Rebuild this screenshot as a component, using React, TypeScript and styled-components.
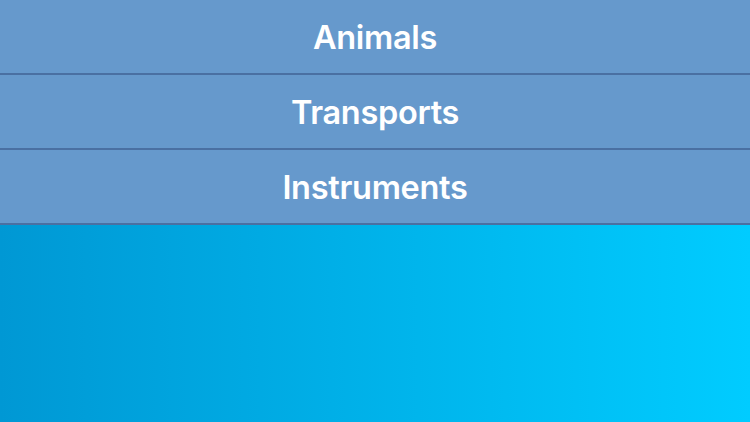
import styled, {createGlobalStyle} from 'styled-components'

const GlobalStyle = createGlobalStyle`
    html, body {
        margin: 0;
        padding: 0;
        height: 100%;
    }
    #root {
        height: 100%;
    }
`

const Screen = styled.div`
    width: 750px;
    height: 422px;
    display: flex;
    flex-direction: column;
    background: linear-gradient(to right, #0098d4, #00ccff);
    font-family: Inter, 'Liberation Sans', sans-serif;
    overflow: hidden;
`

const Row = styled.div`
    height: 72px;
    padding-top: 1px;
    flex: none;
    display: flex;
    align-items: center;
    justify-content: center;
    background: #6699cc;
    border-bottom: 2px solid #4a70a2;
    color: #fff;
    font-size: 32.5px;
    font-weight: 600;
    letter-spacing: -0.3px;
    cursor: pointer;
    user-select: none;
`

const categories = ['Animals', 'Transports', 'Instruments']

export default function App() {
    return (
        <>
            <GlobalStyle />
            <Screen>
                {categories.map((c) => (
                    <Row key={c}>{c}</Row>
                ))}
            </Screen>
        </>
    )
}
